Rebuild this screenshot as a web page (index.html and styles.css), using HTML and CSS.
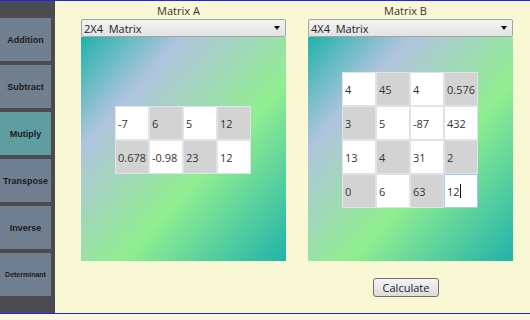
FILE: index.html
```html
<!DOCTYPE html>
<html lang="en">
  <head>
    <title>Matrix Calculator</title>
    <link rel="stylesheet" href="styles.css">
  </head>

  <body>
    <div class="app">
      <div class="sidebar">
        <button class="op">Addition</button>
        <button class="op">Subtract</button>
        <button class="op active">Mutiply</button>
        <button class="op">Transpose</button>
        <button class="op">Inverse</button>
        <button class="op small">Determinant</button>
      </div>
      <div class="main">
        <div class="label">Matrix A</div>
        <div class="label">Matrix B</div>
        <div class="combo"><span>2X4  Matrix</span><span class="arrow"></span></div>
        <div class="combo"><span>4X4  Matrix</span><span class="arrow"></span></div>
        <div class="panel">
          <div class="grid">
            <div class="cell">-7</div>
            <div class="cell gray">6</div>
            <div class="cell">5</div>
            <div class="cell gray">12</div>
            <div class="cell gray">0.678</div>
            <div class="cell">-0.98</div>
            <div class="cell gray">23</div>
            <div class="cell">12</div>
          </div>
        </div>
        <div class="panel">
          <div class="grid">
            <div class="cell">4</div>
            <div class="cell gray">45</div>
            <div class="cell">4</div>
            <div class="cell gray">0.576</div>
            <div class="cell gray">3</div>
            <div class="cell">5</div>
            <div class="cell">-87</div>
            <div class="cell">432</div>
            <div class="cell">13</div>
            <div class="cell gray">4</div>
            <div class="cell">31</div>
            <div class="cell gray">2</div>
            <div class="cell gray">0</div>
            <div class="cell">6</div>
            <div class="cell gray">63</div>
            <div class="cell focus">12<span class="caret"></span></div>
          </div>
        </div>
        <div class="actions">
          <button class="calc">Calculate</button>
        </div>
      </div>
    </div>
    <div class="strip"></div>
  </body>
</html>
```

FILE: styles.css
```css
body {
  margin: 0;
  background-color: #fbf5e4;
  font-family: "Open Sans", sans-serif;
  overflow: hidden;
}

.app {
  display: flex;
  height: 312px;
  border-top: 1px solid #2424e6;
  border-bottom: 1px solid #2424e6;
  background-color: #f8f8d4;
}

.sidebar {
  width: 51px;
  padding: 17px 4px 0 0;
  background-color: #4b4b50;
  display: flex;
  flex-direction: column;
  gap: 4px;
}

.op {
  height: 43px;
  border: none;
  padding: 0;
  background-color: #708090;
  color: #1c1c1c;
  font-family: "Liberation Sans", sans-serif;
  font-weight: bold;
  font-size: 9px;
}

.op.active {
  background-color: #5f9ea0;
}

.op.small {
  font-size: 7px;
}

.main {
  display: grid;
  grid-template-columns: 205px 205px;
  grid-template-rows: 18px 18px 224px auto;
  column-gap: 22px;
  padding-left: 26px;
  align-content: start;
}

.label {
  font-size: 11px;
  line-height: 19px;
  color: #333;
  text-align: center;
  padding-right: 10px;
}

.combo {
  display: flex;
  align-items: center;
  justify-content: space-between;
  box-sizing: border-box;
  height: 18px;
  padding: 0 5px 0 2px;
  border: 1px solid #a4a4a4;
  border-radius: 2px;
  background: linear-gradient(#f2f2f2, #e3e3e3);
  font-size: 11px;
  color: #222;
  white-space: pre;
}

.arrow {
  width: 0;
  height: 0;
  border-left: 3px solid transparent;
  border-right: 3px solid transparent;
  border-top: 4px solid #111;
}

.panel {
  background: linear-gradient(to bottom right, #20b2aa 0%, #b0c4de 25%, #90ee90 60%, #20b2aa 100%);
  padding: 35px 34px 0 34px;
  box-sizing: border-box;
}

.grid {
  height: 136px;
  display: grid;
  grid-template-columns: repeat(4, 34px);
  grid-auto-rows: 34px;
  align-content: center;
}

.cell {
  display: flex;
  align-items: center;
  border: 1px solid #dfe4ea;
  padding-left: 2px;
  background-color: #fff;
  font-size: 11px;
  color: #333;
}

.cell.gray {
  background-color: #d3d3d3;
}

.cell.focus {
  border-color: #a9c6e4;
}

.caret {
  width: 1px;
  height: 14px;
  background-color: #111;
}

.actions {
  grid-column: 2;
  display: flex;
  justify-content: center;
  padding: 17px 9px 0 0;
}

.calc {
  width: 66px;
  height: 19px;
  padding: 0;
  border: 1px solid #707070;
  border-radius: 3px;
  background: linear-gradient(#f4f4f4, #dcdcdc);
  font-family: "Open Sans", sans-serif;
  font-size: 11px;
  color: #222;
}

.strip {
  height: 6px;
}
```
